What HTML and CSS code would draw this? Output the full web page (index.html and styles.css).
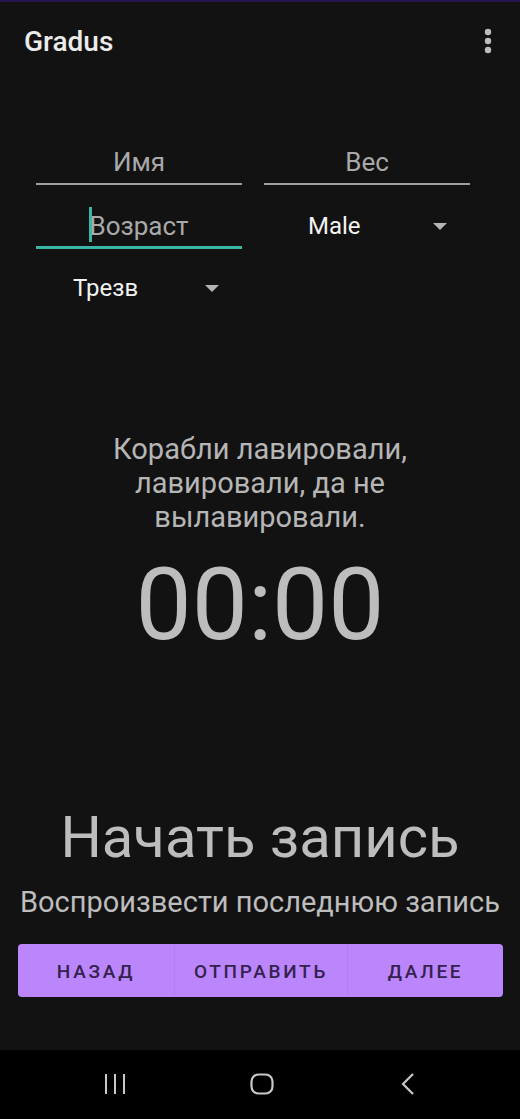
FILE: index.html
```html
<!DOCTYPE html>
<html lang="ru">
<head>
<meta charset="utf-8">
<title>Gradus</title>
<link rel="stylesheet" href="styles.css">
</head>
<body>
<div class="screen">
  <div class="status-strip"></div>
  <header class="appbar">
    <h1 class="title">Gradus</h1>
    <svg class="menu" width="8" height="26" viewBox="0 0 8 26" aria-hidden="true">
      <circle cx="4" cy="4" r="3.2" fill="#bdbdbd"/>
      <circle cx="4" cy="13" r="3.2" fill="#bdbdbd"/>
      <circle cx="4" cy="22" r="3.2" fill="#bdbdbd"/>
    </svg>
  </header>

  <section class="form">
    <div class="field"><span class="hint">Имя</span></div>
    <div class="field"><span class="hint">Вес</span></div>
    <div class="field field-focused"><span class="hint hint-cursor">Возраст</span></div>
    <div class="spinner spinner-male">
      <span class="spinner-text">Male</span>
      <svg class="arrow" width="14" height="7" viewBox="0 0 14 7"><polygon points="0,0 14,0 7,7" fill="#b4b4b4"/></svg>
    </div>
    <div class="spinner spinner-state">
      <span class="spinner-text">Трезв</span>
      <svg class="arrow" width="14" height="7" viewBox="0 0 14 7"><polygon points="0,0 14,0 7,7" fill="#b4b4b4"/></svg>
    </div>
  </section>

  <p class="proverb">Корабли лавировали, лавировали, да не вылавировали.</p>
  <div class="timer">00:00</div>

  <div class="record">Начать запись</div>
  <div class="playback">Воспроизвести последнюю запись</div>

  <div class="buttons">
    <button class="btn btn-back">НАЗАД</button>
    <button class="btn btn-send">ОТПРАВИТЬ</button>
    <button class="btn btn-next">ДАЛЕЕ</button>
  </div>

  <nav class="navbar">
    <svg width="22" height="22" viewBox="0 0 22 22" aria-hidden="true">
      <rect x="1" y="1" width="2" height="20" fill="#c8c8c8"/>
      <rect x="10" y="1" width="2" height="20" fill="#c8c8c8"/>
      <rect x="19" y="1" width="2" height="20" fill="#c8c8c8"/>
    </svg>
    <svg width="24" height="22" viewBox="0 0 24 22" aria-hidden="true">
      <rect x="1.5" y="1.5" width="21" height="19" rx="7" fill="none" stroke="#c8c8c8" stroke-width="2.2"/>
    </svg>
    <svg width="16" height="22" viewBox="0 0 16 22" aria-hidden="true">
      <polyline points="13,1 3,11 13,21" fill="none" stroke="#c8c8c8" stroke-width="2.2"/>
    </svg>
  </nav>
</div>
</body>
</html>
```
FILE: styles.css
```css
* { box-sizing: border-box; }
html, body { margin: 0; padding: 0; background: #121212; }
body { font-family: Roboto, "Noto Sans", sans-serif; }

.screen {
  width: 520px;
  height: 1119px;
  display: flex;
  flex-direction: column;
  background: #121212;
  overflow: hidden;
}

.status-strip { height: 2px; background: #24144f; flex: none; }

.appbar {
  display: flex;
  justify-content: space-between;
  align-items: center;
  padding: 24px 28px 0 24px;
}
.title {
  margin: 0;
  font-size: 28px;
  line-height: 32px;
  font-weight: 500;
  color: #ebebeb;
}
.menu { display: block; margin-top: -2px; }

.form {
  margin-top: 63px;
  padding-left: 36px;
  display: grid;
  grid-template-columns: 206px 206px;
  column-gap: 22px;
}
.field {
  height: 64px;
  padding-top: 26px;
  padding-bottom: 6px;
  border-bottom: 2px solid #9f9f9f;
  text-align: center;
  font-size: 26px;
  line-height: 30px;
  color: #a9a9a9;
}
.field-focused { border-bottom: 3px solid #3bb5a7; padding-bottom: 5px; }
.hint-cursor { position: relative; }
.hint-cursor::before {
  content: "";
  position: absolute;
  left: 0;
  top: -4px;
  width: 3px;
  height: 35px;
  background: #3bb5a7;
}

.spinner {
  height: 62px;
  padding-top: 24px;
  padding-right: 23px;
  display: flex;
  justify-content: space-between;
  align-items: flex-start;
  align-self: end;
  color: #f2f2f2;
  font-size: 24px;
  line-height: 30px;
}
.spinner .arrow { margin-top: 12px; flex: none; }
.spinner-male { padding-left: 44px; }
.spinner-state { padding-left: 37px; }

.proverb {
  margin: 121px auto 0;
  width: 340px;
  text-align: center;
  font-size: 29px;
  line-height: 34px;
  color: #b6b6b6;
}
.timer {
  margin-top: 21px;
  text-align: center;
  font-size: 100px;
  line-height: 100px;
  color: #bdbdbd;
}
.record {
  margin-top: 148px;
  text-align: center;
  font-size: 58px;
  line-height: 68px;
  color: #bdbdbd;
}
.playback {
  margin-top: 14px;
  text-align: center;
  font-size: 29px;
  line-height: 34px;
  color: #bdbdbd;
  white-space: nowrap;
}

.buttons {
  margin: 25px 17px 0 18px;
  height: 53px;
  display: flex;
  background: #bb86fc;
  border-radius: 4px;
  overflow: hidden;
}
.btn {
  border: 0;
  margin: 0;
  padding: 2px 0 0;
  background: transparent;
  font-family: Roboto, "Noto Sans", sans-serif;
  font-weight: 500;
  font-size: 19px;
  letter-spacing: 2.7px;
  color: #34214d;
}
.btn-back { width: 156px; }
.btn-send { width: 174px; border-left: 1px solid rgba(0,0,0,0.05); border-right: 1px solid rgba(0,0,0,0.05); }
.btn-next { flex: 1; }

.navbar {
  margin-top: auto;
  height: 69px;
  background: #000;
  display: flex;
  align-items: center;
  padding: 0 0 2px 104px;
}
.navbar svg { display: block; flex: none; }
.navbar svg:nth-child(2) { margin-left: 124px; }
.navbar svg:nth-child(3) { margin-left: 126px; }
```
